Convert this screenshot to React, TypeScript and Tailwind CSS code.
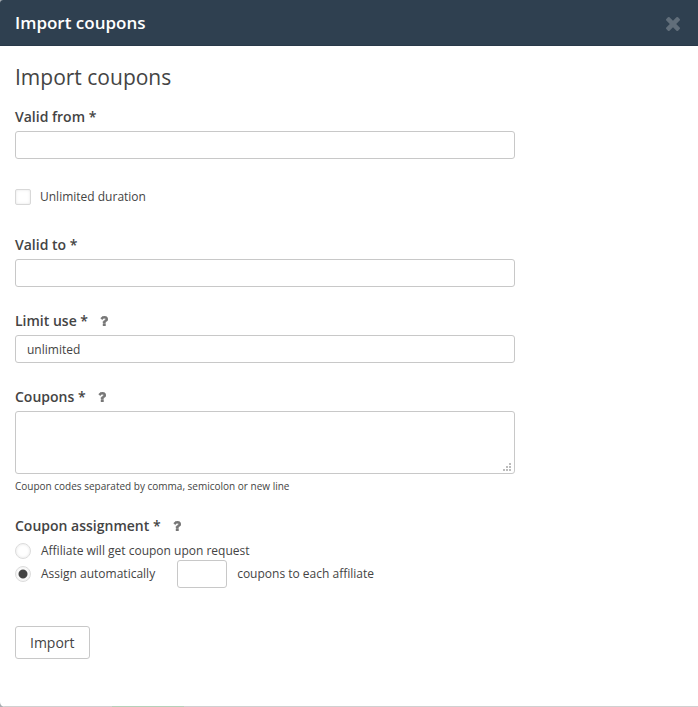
import type { ReactNode } from "react";

function CloseIcon() {
  return (
    <svg viewBox="302 366 1188 1188" className="size-3.5 fill-current" aria-hidden="true">
      <path d="M1490 1322q0 40-28 68l-136 136q-28 28-68 28t-68-28l-294-294-294 294q-28 28-68 28t-68-28l-136-136q-28-28-28-68t28-68l294-294-294-294q-28-28-28-68t28-68l136-136q28-28 68-28t68 28l294 294 294-294q28-28 68-28t68 28l136 136q28 28 28 68t-28 68l-294 294 294 294q28 28 28 68z" />
    </svg>
  );
}

function HelpIcon() {
  return (
    <svg viewBox="388 256 1016 1280" className="mb-px ml-3 h-[10px] w-2 fill-[#777] stroke-[#777] stroke-[60]" aria-hidden="true">
      <path d="M1088 1256v240q0 16-12 28t-28 12h-240q-16 0-28-12t-12-28v-240q0-16 12-28t28-12h240q16 0 28 12t12 28zm316-600q0 54-15.500 101t-35 76.500-55 59.500-57.500 43.500-61 35.500q-41 23-68.500 65t-27.500 67q0 17-12 32.500t-28 15.500h-240q-15 0-25.500-18.500t-10.500-37.500v-45q0-83 65-156.500t143-108.500q59-27 84-56t25-76q0-42-46.500-74t-107.500-32q-65 0-108 29-35 25-107 115-13 16-31 16-12 0-25-8l-164-125q-13-10-15.500-25t5.500-28q160-266 464-266 80 0 161 31t146 83 106 127.500 41 158.500z" />
    </svg>
  );
}

function FieldLabel({ htmlFor, help, children }: { htmlFor: string; help?: boolean; children: ReactNode }) {
  return (
    <div className="mb-1 flex h-5 items-center text-sm font-semibold">
      <label htmlFor={htmlFor}>{children}</label>
      {help && <HelpIcon />}
    </div>
  );
}

const inputClass =
  "block h-7 w-full rounded-[3px] border border-[#c8c8c8] bg-white px-[11px] text-xs outline-none";
const radioClass =
  "size-4 shrink-0 appearance-none rounded-full border border-[#dcdcdc] bg-white shadow-[inset_0_0_3px_#e4e4e4] checked:bg-[radial-gradient(circle,#444_0,#444_4px,transparent_5px)]";

export default function App() {
  return (
    <div className="bg-[#a8adb2] font-['Open_Sans',sans-serif] text-[#444]">
      <section className="relative overflow-hidden rounded-tl-[3px] rounded-bl-[5px] bg-white">
        <header className="flex h-[46px] items-center justify-between border-b border-[#293949] bg-[#2f4050] pr-[18px] pl-[15px] text-white">
          <h1 className="text-[17px] leading-6 font-semibold">Import coupons</h1>
          <button type="button" aria-label="Close" className="mt-0.5 text-[#616e7a]">
            <CloseIcon />
          </button>
        </header>
        <form className="px-[15px] pt-[15px] pb-[47px]" onSubmit={(e) => e.preventDefault()}>
          <h2 className="mb-[14px] text-[21px] leading-8">Import coupons</h2>
          <div className="max-w-[500px]">
            <FieldLabel htmlFor="from">Valid from *</FieldLabel>
            <input id="from" type="text" className={inputClass} />

            <label className="my-7 flex h-5 items-center gap-[9px] text-xs">
              <input
                type="checkbox"
                className="size-4 appearance-none rounded-[2px] border border-[#d8d8d8] bg-white shadow-[inset_0_0_3px_#e4e4e4]"
              />
              Unlimited duration
            </label>

            <FieldLabel htmlFor="to">Valid to *</FieldLabel>
            <input id="to" type="text" className={inputClass} />

            <div className="mt-6">
              <FieldLabel htmlFor="limit" help>Limit use *</FieldLabel>
              <input id="limit" type="text" defaultValue="unlimited" className={inputClass} />
            </div>

            <div className="mt-6">
              <FieldLabel htmlFor="codes" help>Coupons *</FieldLabel>
              <div className="relative">
                <textarea
                  id="codes"
                  className="block h-[63px] w-full resize-none rounded-[3px] border border-[#c8c8c8] bg-white px-[11px] py-1 text-xs outline-none"
                />
                <svg viewBox="0 0 8 8" className="absolute right-1 bottom-[3px] size-2 fill-[#bcbcbc]" shapeRendering="crispEdges" aria-hidden="true">
                  <path d="M6 0h2v2H6zM3 3h2v2H3zM6 3h2v2H6zM0 6h2v2H0zM3 6h2v2H3zM6 6h2v2H6z" />
                </svg>
              </div>
              <p className="mt-1 text-[10px] leading-4">
                Coupon codes separated by comma, semicolon or new line
              </p>
            </div>

            <fieldset className="mt-[22px] text-xs">
              <legend className="flex h-5 items-center text-sm font-semibold">
                Coupon assignment *<HelpIcon />
              </legend>
              <label className="mt-[5px] flex h-5 items-center gap-[10px]">
                <input type="radio" name="assignment" className={radioClass} />
                Affiliate will get coupon upon request
              </label>
              <div className="-mt-px flex items-center">
                <label className="flex items-center gap-[10px]">
                  <input type="radio" name="assignment" defaultChecked className={radioClass} />
                  Assign automatically
                </label>
                <input
                  id="count"
                  type="text"
                  className="mr-[10px] ml-[22px] h-7 w-[50px] rounded-[3px] border border-[#c8c8c8] bg-white px-2 outline-none"
                />
                <label htmlFor="count">coupons to each affiliate</label>
              </div>
            </fieldset>
          </div>
          <button type="submit" className="mt-[38px] block h-[33px] rounded-[3px] border border-[#c8c8c8] bg-white px-[14px] text-sm">
            Import
          </button>
        </form>
        <div className="flex h-px bg-[#d0d0d0] pl-28">
          <span className="w-[72px] bg-[#b5d0ba]" />
        </div>
      </section>
    </div>
  );
}
